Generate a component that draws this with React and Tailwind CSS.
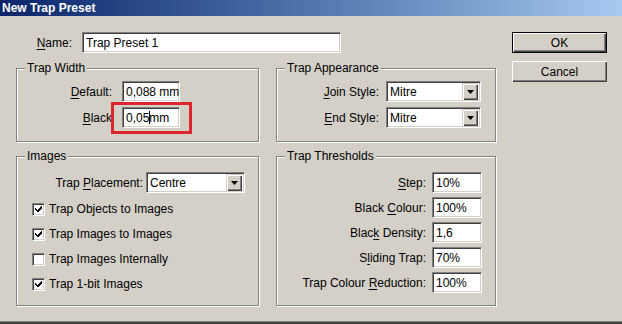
import React from 'react'

const sunken = 'border border-t-[#808080] border-l-[#808080] border-b-white border-r-white shadow-[inset_1px_1px_0_#404040,inset_-1px_-1px_0_#d4d0c8]'

function U({ children }) {
  return <span className="underline underline-offset-2 decoration-1">{children}</span>
}

function Field({ w, children }) {
  return (
    <div className={`${sunken} bg-white h-[21px] flex items-center pl-[3px] pr-[1px] overflow-hidden whitespace-nowrap ${w}`}>
      {children}
    </div>
  )
}

function Select({ w, value }) {
  return (
    <div className={`${sunken} bg-white h-[21px] flex items-center pl-[3px] pr-[2px] ${w}`}>
      <span className="flex-1">{value}</span>
      <div className="w-[16px] h-[17px] bg-[#d4d0c8] shadow-[inset_1px_1px_0_#d4d0c8,inset_2px_2px_0_#fff,inset_-1px_-1px_0_#404040,inset_-2px_-2px_0_#808080] flex items-center justify-center">
        <svg width="7" height="4" viewBox="0 0 7 4"><path d="M0 0h7L3.5 4z" fill="#000" /></svg>
      </div>
    </div>
  )
}

function Group({ title, className, children }) {
  return (
    <div className={`relative border border-[#808080] shadow-[inset_1px_1px_0_#fff,1px_1px_0_#fff] ${className}`}>
      <span className="absolute -top-[8px] left-[8px] px-[2px] bg-[#d4d0c8] leading-[14px]">{title}</span>
      {children}
    </div>
  )
}

function Check({ checked, label }) {
  return (
    <div className="flex items-center h-[20px] gap-[4px]">
      <div className={`${sunken} w-[13px] h-[13px] bg-white flex items-center justify-center`}>
        {checked && (
          <svg width="7" height="7" viewBox="0 0 7 7">
            <path d="M0 2h1v1h1v1h1V3h1V2h1V1h1V0h1v3h-1v1h-1v1h-1v1h-1v1H3V6H2V5H1V4H0z" fill="#000" />
          </svg>
        )}
      </div>
      <span>{label}</span>
    </div>
  )
}

function Row({ labelW, gap, label, children }) {
  return (
    <div className="flex items-center">
      <div className={`text-right whitespace-nowrap ${labelW} ${gap}`}>{label}</div>
      {children}
    </div>
  )
}

export default function App() {
  return (
    <div className="w-[622px] h-[324px] bg-[#d4d0c8] flex flex-col font-['Liberation_Sans',Arial,sans-serif] text-[12px] text-black leading-[14px]">
      {/* title bar */}
      <div className="h-[16px] bg-linear-to-r from-[#0a246a] to-[#a6caf0] flex items-center pl-[2px]">
        <span className="text-white font-bold text-[12px]">New Trap Preset</span>
      </div>

      <div className="flex flex-1">
        <div className="w-[512px] pl-[16px]">
          {/* name */}
          <div className="mt-[16px] flex items-center">
            <div className="w-[56px] text-right"><U>N</U>ame:</div>
            <Field w="w-[259px] ml-[10px]">Trap Preset 1</Field>
          </div>

          <div className="mt-[15px] grid grid-cols-[243px_220px] gap-x-[17px] gap-y-[14px]">
            <Group title="Trap Width" className="h-[74px] pt-[12px]">
              <div className="flex flex-col gap-[5px]">
                <Row labelW="w-[95px]" gap="mr-[10px]" label={<><U>D</U>efault:</>}>
                  <Field w="w-[58px]">0,088 mm</Field>
                </Row>
                <Row labelW="w-[95px]" gap="mr-[10px]" label={<><U>B</U>lack</>}>
                  <Field w="w-[58px]">
                    0,05<span className="inline-block w-px h-[13px] bg-black -mr-px" /> mm
                  </Field>
                </Row>
              </div>
              <div className="absolute left-[94px] top-[33px] w-[81px] h-[32px] border-[3px] border-[#dc262d]" />
            </Group>

            <Group title="Trap Appearance" className="h-[74px] pt-[12px]">
              <div className="flex flex-col gap-[5px]">
                <Row labelW="w-[102px]" gap="mr-[7px]" label={<><U>J</U>oin Style:</>}>
                  <Select w="w-[95px]" value="Mitre" />
                </Row>
                <Row labelW="w-[102px]" gap="mr-[7px]" label={<><U>E</U>nd Style:</>}>
                  <Select w="w-[95px]" value="Mitre" />
                </Row>
              </div>
            </Group>

            <Group title="Images" className="h-[150px] pt-[15px]">
              <Row labelW="w-[126px]" gap="mr-[3px]" label={<>Trap <U>P</U>lacement:</>}>
                <Select w="w-[99px]" value="Centre" />
              </Row>
              <div className="mt-[6px] pl-[15px] flex flex-col gap-[5px]">
                <Check checked label="Trap Objects to Images" />
                <Check checked label="Trap Images to Images" />
                <Check label="Trap Images Internally" />
                <Check checked label="Trap 1-bit Images" />
              </div>
            </Group>

            <Group title="Trap Thresholds" className="h-[150px] pt-[15px]">
              <div className="flex flex-col gap-[4px]">
                <Row labelW="w-[149px]" gap="mr-[6px]" label={<><U>S</U>tep:</>}>
                  <Field w="w-[50px]">10%</Field>
                </Row>
                <Row labelW="w-[149px]" gap="mr-[6px]" label={<>Black <U>C</U>olour:</>}>
                  <Field w="w-[50px]">100%</Field>
                </Row>
                <Row labelW="w-[149px]" gap="mr-[6px]" label={<>Blac<U>k</U> Density:</>}>
                  <Field w="w-[50px]">1,6</Field>
                </Row>
                <Row labelW="w-[149px]" gap="mr-[6px]" label={<>S<U>l</U>iding Trap:</>}>
                  <Field w="w-[50px]">70%</Field>
                </Row>
                <Row labelW="w-[149px]" gap="mr-[6px]" label={<>Trap Colour <U>R</U>eduction:</>}>
                  <Field w="w-[50px]">100%</Field>
                </Row>
              </div>
            </Group>
          </div>
        </div>

        {/* buttons */}
        <div className="pt-[16px] flex flex-col gap-[8px]">
          <button className="w-[95px] h-[21px] border border-black bg-[#d4d0c8] shadow-[inset_1px_1px_0_#fff,inset_-1px_-1px_0_#404040,inset_-2px_-2px_0_#808080] text-[12px]">OK</button>
          <button className="w-[95px] h-[21px] bg-[#d4d0c8] shadow-[inset_1px_1px_0_#fff,inset_-1px_-1px_0_#404040,inset_-2px_-2px_0_#808080] text-[12px]">Cancel</button>
        </div>
      </div>

      <div className="h-[3px] border-t border-[#808080] bg-[#404040]" />
    </div>
  )
}
